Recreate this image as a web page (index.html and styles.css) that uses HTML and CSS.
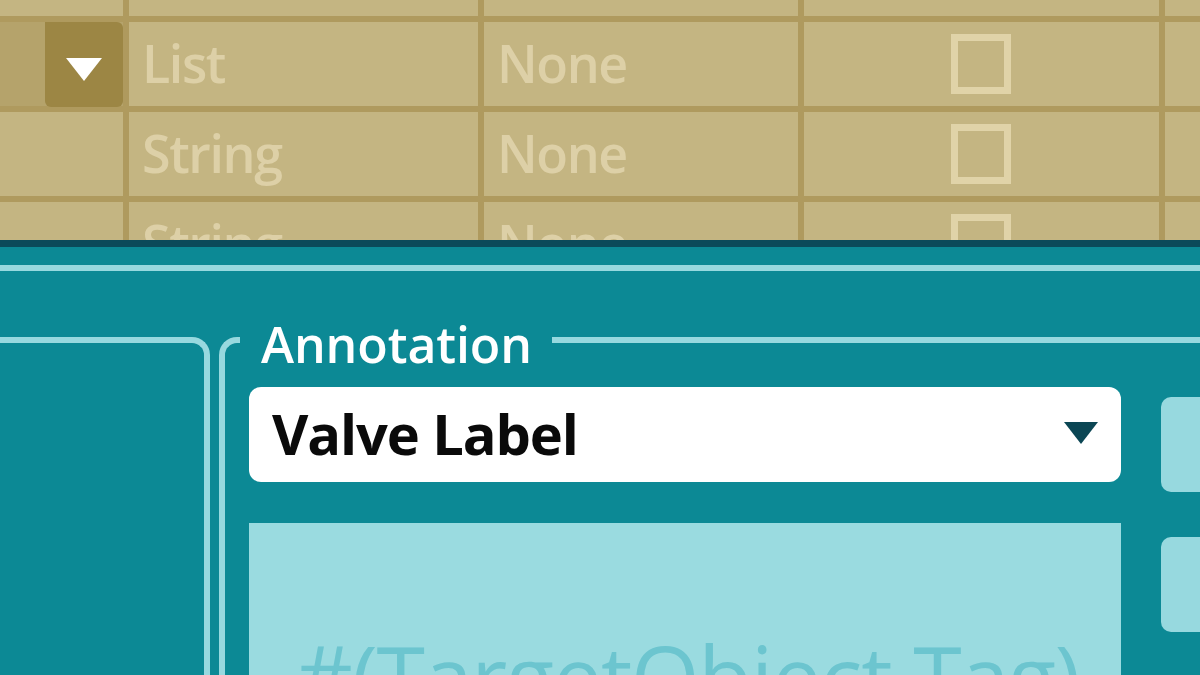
FILE: index.html
```html
<!DOCTYPE html>
<html>
<head>
<meta charset="utf-8">
<link rel="stylesheet" href="styles.css">
</head>
<body>
<div class="page">
  <section class="table">
    <div class="cell"></div><div class="cell"></div><div class="cell"></div><div class="cell"></div><div class="cell"></div>

    <div class="cell first"><div class="stub"></div><div class="drop"><svg width="36" height="24" viewBox="0 0 36 24"><polygon points="0,0 36,0 18,23" fill="#ffffff"/></svg></div></div>
    <div class="cell txt">List</div>
    <div class="cell txt">None</div>
    <div class="cell chk"><div class="box"></div></div>
    <div class="cell"></div>

    <div class="cell"></div>
    <div class="cell txt">String</div>
    <div class="cell txt">None</div>
    <div class="cell chk"><div class="box"></div></div>
    <div class="cell"></div>

    <div class="cell"></div>
    <div class="cell txt">String</div>
    <div class="cell txt">None</div>
    <div class="cell chk"><div class="box"></div></div>
    <div class="cell"></div>
  </section>

  <section class="panel">
    <div class="rule"></div>
    <div class="content">
      <div class="side"></div>
      <div class="fieldset">
        <div class="legend">Annotation</div>
        <div class="body">
          <div class="main">
            <div class="select">
              <span class="value">Valve Label</span>
              <svg class="caret" width="34" height="22" viewBox="0 0 34 22"><polygon points="0,0 34,0 17,22" fill="#0b4654"/></svg>
            </div>
            <div class="textarea"><span class="expr">#(TargetObject.Tag)</span></div>
          </div>
          <div class="buttons">
            <div class="btn"></div>
            <div class="btn"></div>
          </div>
        </div>
      </div>
    </div>
  </section>
</div>
</body>
</html>
```

FILE: styles.css
```css
* { box-sizing: border-box; }
html, body { margin: 0; padding: 0; }
body {
  width: 1200px;
  height: 675px;
  overflow: hidden;
  font-family: "Open Sans", "Noto Sans", sans-serif;
  background: #0c8995;
}
.page {
  width: 1200px;
  height: 675px;
  display: flex;
  flex-direction: column;
  overflow: hidden;
}

/* ---------- top table ---------- */
.table {
  height: 240px;
  flex: none;
  overflow: hidden;
  display: grid;
  grid-template-columns: 123px 349px 314px 355px 1fr;
  grid-template-rows: 16px 84px 84px 84px;
  gap: 6px;
  background: #af9a5e;
}
.cell {
  background: #c4b582;
  min-width: 0;
}
.cell.txt {
  display: flex;
  align-items: center;
  padding-left: 13px;
  font-size: 52px;
  font-weight: 600;
  line-height: 1;
  color: #ddd0a7;
  letter-spacing: -1.4px;
  padding-bottom: 2px;
}
.cell.first {
  display: flex;
  background: #b5a36b;
}
.stub { width: 45px; }
.drop {
  flex: 1;
  background: #9c8644;
  border-radius: 0 6px 6px 6px;
  display: flex;
  justify-content: center;
  align-items: center;
  padding-top: 10px;
  margin-bottom: -1px;
}
.drop svg { display: block; }
.cell.chk {
  display: flex;
  align-items: center;
  justify-content: center;
  padding-right: 2px;
}
.box {
  width: 60px;
  height: 60px;
  border: 7px solid #e0d3a8;
}

/* ---------- bottom panel ---------- */
.panel {
  flex: 1;
  background: #0c8995;
  border-top: 7px solid #0b4a5a;
  padding-top: 18px;
  display: flex;
  flex-direction: column;
  min-height: 0;
}
.rule {
  height: 6px;
  background: #97d9df;
  flex: none;
}
.content {
  margin-top: 66px;
  flex: 1;
  display: flex;
  min-height: 0;
}
.side {
  width: 210px;
  flex: none;
  border-top: 6px solid #97d9df;
  border-right: 6px solid #97d9df;
  border-top-right-radius: 18px;
}
.fieldset {
  margin-left: 9px;
  flex: 1;
  border-top: 6px solid #97d9df;
  border-left: 6px solid #97d9df;
  border-top-left-radius: 18px;
  padding-left: 24px;
  display: flex;
  flex-direction: column;
  min-width: 0;
}
.legend {
  align-self: flex-start;
  margin-top: -24px;
  margin-left: -9px;
  padding: 0 20px 0 21px;
  background: #0c8995;
  color: #ffffff;
  font-size: 50px;
  font-weight: 600;
  line-height: 50px;
  letter-spacing: -0.1px;
}
.body {
  margin-top: 18px;
  display: flex;
  gap: 40px;
}
.main {
  width: 872px;
  flex: none;
  display: flex;
  flex-direction: column;
  gap: 41px;
}
.select {
  height: 95px;
  background: #ffffff;
  border-radius: 12px;
  display: flex;
  align-items: center;
  justify-content: space-between;
  padding: 0 23px 0 23px;
}
.value {
  font-size: 56px;
  font-weight: 700;
  color: #0a0a0a;
  line-height: 1;
  letter-spacing: -1.1px;
  padding-bottom: 4px;
}
.caret { display: block; margin-top: -3px; }
.textarea {
  height: 200px;
  background: #9adbe0;
  padding: 109px 0 0 47px;
}
.expr {
  font-size: 88px;
  font-weight: 400;
  line-height: 1;
  color: #6cc5cf;
  white-space: nowrap;
  letter-spacing: -1.2px;
}
.buttons {
  display: flex;
  flex-direction: column;
  gap: 45px;
  padding-top: 10px;
  width: 80px;
  flex: none;
}
.btn {
  height: 95px;
  background: #97d9df;
  border-radius: 10px;
}
```
